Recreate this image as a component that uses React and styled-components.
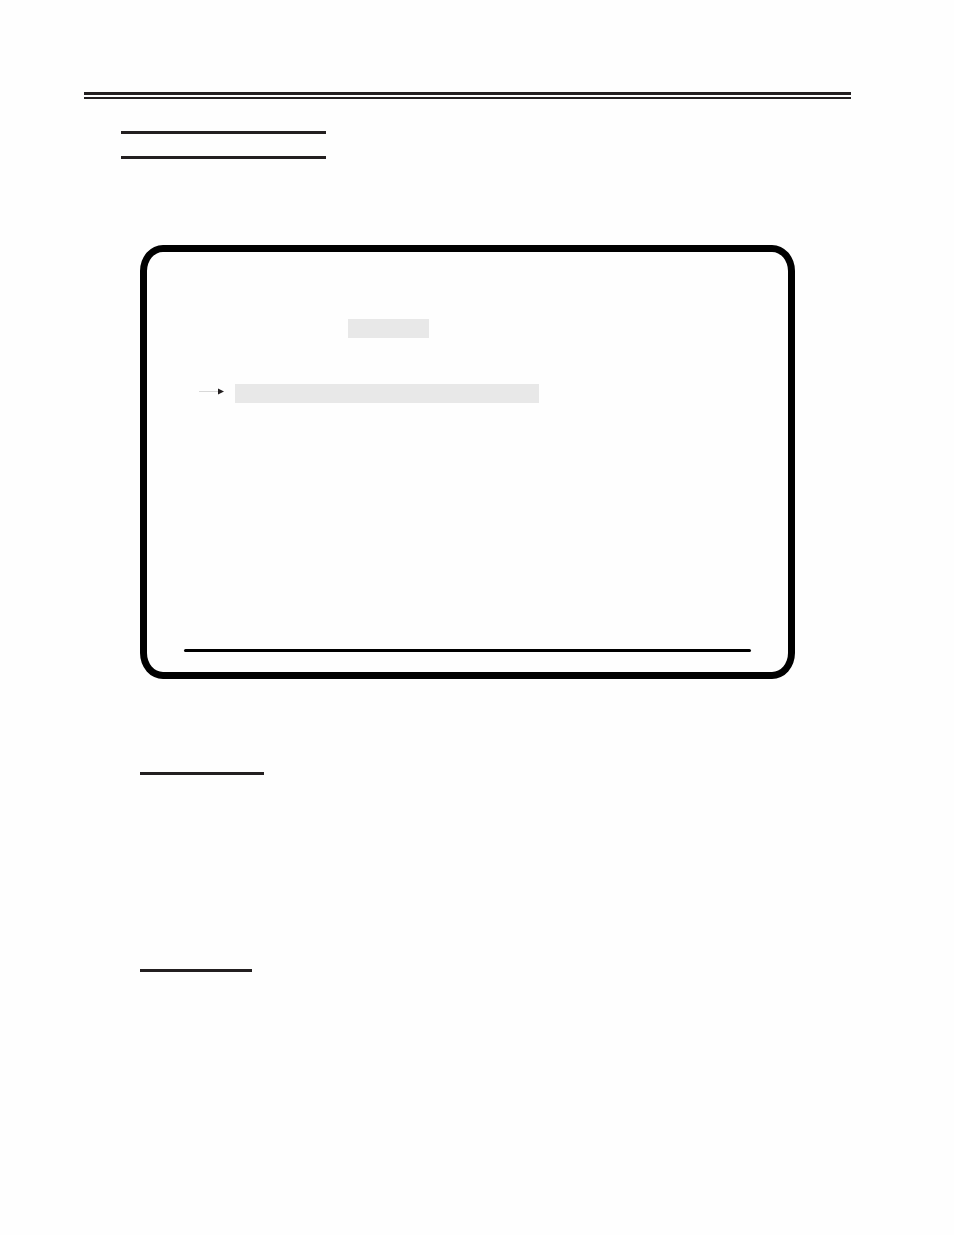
import React from "react";
import styled, { createGlobalStyle } from "styled-components";

const INK = "#231f20";

const GlobalStyle = createGlobalStyle`
  body {
    margin: 0;
    background: #fefefe;
    font-family: "Liberation Sans", sans-serif;
  }
`;

const Page = styled.main`
  box-sizing: border-box;
  min-height: 100vh;
  padding: 92px 103px 92px 84px;
`;

const HeaderRule = styled.header`
  height: 2px;
  border-top: 3px solid ${INK};
  border-bottom: 2px solid ${INK};
`;

const TitleBand = styled.div`
  width: 205px;
  height: 22px;
  margin: 32px 0 0 37px;
  border-top: 3px solid ${INK};
  border-bottom: 3px solid ${INK};
`;

const Content = styled.div`
  padding: 0 56px;
`;

const Screen = styled.section`
  margin-top: 86px;
  padding: 67px 37px 20px;
  border: 7px solid #000;
  border-radius: 23px / 26px;
`;

const Row = styled.div`
  display: flex;
  align-items: flex-start;
  gap: 11px;
  margin-top: ${(p) => p.$top}px;
  padding-left: ${(p) => p.$indent}px;
`;

const Field = styled.div`
  width: ${(p) => p.$width}px;
  height: 19px;
  background: #e8e8e8;
`;

const Arrow = styled.svg`
  display: block;
  flex: none;
  width: 25px;
  height: 16px;
`;

const ScreenRule = styled.div`
  height: 3px;
  margin-top: 246px;
  border-radius: 2px;
  background: #000;
`;

const Underline = styled.div`
  width: ${(p) => p.$width}px;
  height: 3px;
  margin-top: ${(p) => p.$top}px;
  background: ${INK};
`;

export default function App() {
  return (
    <>
      <GlobalStyle />
      <Page>
        <HeaderRule />
        <TitleBand />
        <Content>
          <Screen>
            <Row $top={0} $indent={164}>
              <Field $width={81} />
            </Row>
            <Row $top={46} $indent={15}>
              <Arrow viewBox="0 0 25 16" aria-hidden="true">
                <path d="M0 7.5H20" stroke="#d8d8d8" strokeWidth="1" />
                <path d="M19 4.5L25 7.5L19 10.5Z" fill={INK} />
              </Arrow>
              <Field $width={304} />
            </Row>
            <ScreenRule />
          </Screen>
          <Underline $width={124} $top={93} />
          <Underline $width={112} $top={194} />
        </Content>
      </Page>
    </>
  );
}
